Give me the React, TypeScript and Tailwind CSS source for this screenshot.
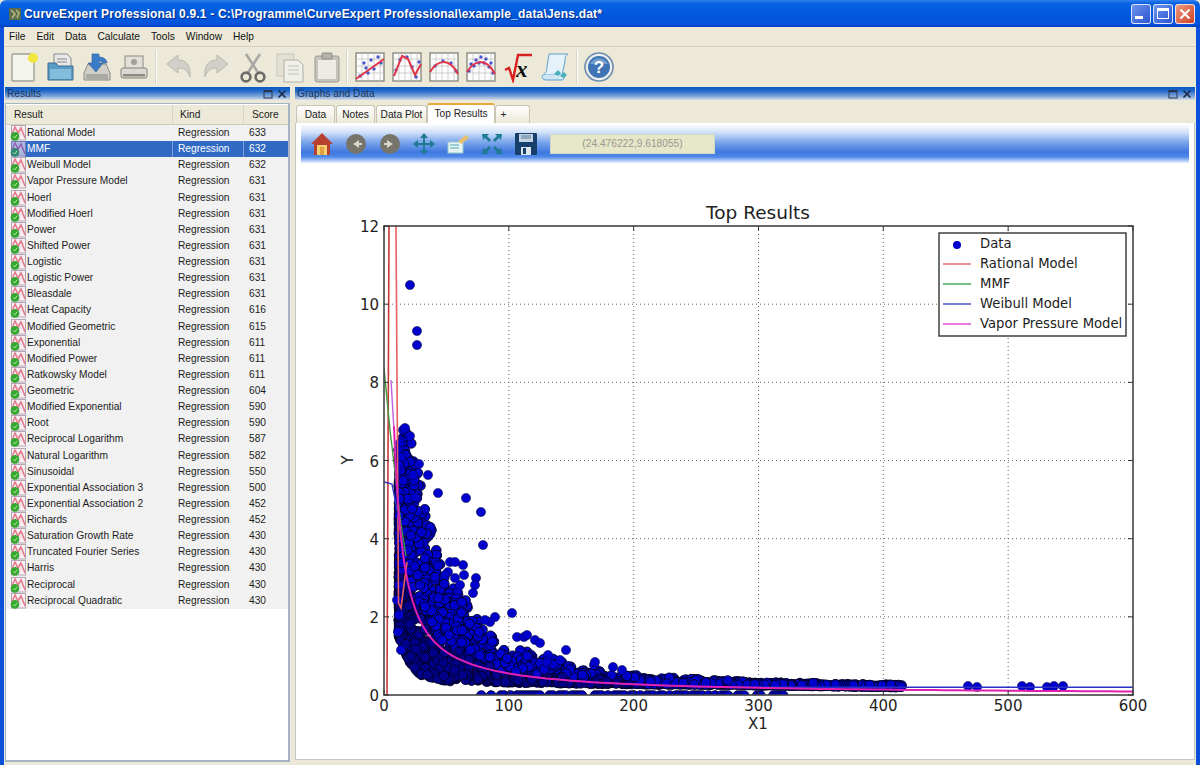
import type { ReactNode } from "react";

const MODELS: [string, number][] = [
  ["Rational Model", 633],
  ["MMF", 632],
  ["Weibull Model", 632],
  ["Vapor Pressure Model", 631],
  ["Hoerl", 631],
  ["Modified Hoerl", 631],
  ["Power", 631],
  ["Shifted Power", 631],
  ["Logistic", 631],
  ["Logistic Power", 631],
  ["Bleasdale", 631],
  ["Heat Capacity", 616],
  ["Modified Geometric", 615],
  ["Exponential", 611],
  ["Modified Power", 611],
  ["Ratkowsky Model", 611],
  ["Geometric", 604],
  ["Modified Exponential", 590],
  ["Root", 590],
  ["Reciprocal Logarithm", 587],
  ["Natural Logarithm", 582],
  ["Sinusoidal", 550],
  ["Exponential Association 3", 500],
  ["Exponential Association 2", 452],
  ["Richards", 452],
  ["Saturation Growth Rate", 430],
  ["Truncated Fourier Series", 430],
  ["Harris", 430],
  ["Reciprocal", 430],
  ["Reciprocal Quadratic", 430],
];

// plot coordinates
const px = (x: number) => 384 + x * 1.2483;
const py = (y: number) => 695 - y * 39.08;

// upper edge of the point cloud, data x -> data y
const UPPER: [number, number][] = [
  [12, 6.2], [16, 6.8], [22, 6.5], [29, 5.4], [37, 4.4], [47, 3.1], [60, 2.6], [69, 2.35], [77, 1.8],
  [90, 1.45], [106, 1.25], [117, 1.0], [147, 0.85], [175, 0.62], [205, 0.48], [300, 0.33], [415, 0.26],
];
const LOWER: [number, number][] = [
  [12, 1.5], [18, 1.0], [24, 0.65], [30, 0.5], [50, 0.36], [100, 0.32], [200, 0.28], [300, 0.25], [415, 0.2],
];

function interp(table: [number, number][], x: number) {
  for (let i = 1; i < table.length; i++) {
    if (x <= table[i][0]) {
      const [x0, y0] = table[i - 1];
      const [x1, y1] = table[i];
      return y0 + ((y1 - y0) * (x - x0)) / (x1 - x0);
    }
  }
  return table[table.length - 1][1];
}

let seed = 12345;
function rnd() {
  seed = (seed + 0x6d2b79f5) | 0;
  let t = Math.imul(seed ^ (seed >>> 15), 1 | seed);
  t = (t + Math.imul(t ^ (t >>> 7), 61 | t)) ^ t;
  return ((t ^ (t >>> 14)) >>> 0) / 4294967296;
}

// jagged top edge on the long tail
const BUMPS = Array.from({ length: 80 }, () => 0.55 + rnd() * 0.6);

const CLOUD: [number, number, string][] = [];
for (let i = 0; i < 2100; i++) {
  const x = 12 + 403 * Math.pow(rnd(), 2.35);
  const lo = interp(LOWER, x);
  const bump = x > 90 ? BUMPS[Math.floor(x / 6)] : 1;
  const hi = lo + (interp(UPPER, x) - lo) * bump;
  const v = Math.pow(rnd(), 1.4);
  const dark = v < 0.35 && x < 200;
  CLOUD.push([px(x), py(lo + (hi - lo) * v), dark ? "#00008a" : "#0000cc"]);
}
// the row of zero values along the axis
for (let x = 78; x < 320; x += 2.6) {
  if (rnd() > 0.35) CLOUD.push([px(x), 695.5, "#0000cc"]);
}

const OUTLIERS: [number, number][] = [
  [410, 285], [417, 331], [417, 345], [403, 430], [405, 428], [410, 436], [466, 498], [481, 512], [483, 545],
  [512, 613], [495, 617], [490, 622], [485, 620], [438, 493], [428, 475], [419, 464], [450, 562], [455, 562],
  [463, 565], [464, 575], [460, 585], [455, 578], [448, 572], [445, 575], [476, 578], [475, 585], [473, 593],
  [517, 637], [524, 637], [527, 635], [535, 640], [540, 643], [566, 650], [560, 660], [548, 655], [547, 662],
  [594, 665], [595, 662], [613, 667], [622, 670], [968, 686], [977, 687], [1022, 686], [1030, 687], [1047, 687],
  [1054, 686], [1063, 686], [400, 443], [398, 450], [401, 457], [399, 465], [397, 600], [399, 615], [398, 632],
  [401, 650], [399, 585], [413, 475], [415, 497],
];

const hyper = (floor: number, from: number) => {
  const pts: string[] = [];
  for (let x = from; x <= 600; x += x < 60 ? 1 : 10) pts.push(`${px(x).toFixed(1)},${py(Math.max(55 / x, floor)).toFixed(1)}`);
  return pts.join(" ");
};

function Plot() {
  const xTicks = [0, 100, 200, 300, 400, 500, 600];
  const yTicks = [0, 2, 4, 6, 8, 10, 12];
  const legend: [string, string][] = [
    ["Rational Model", "#e05555"],
    ["MMF", "#2f9a3f"],
    ["Weibull Model", "#3038c0"],
    ["Vapor Pressure Model", "#e030d0"],
  ];
  return (
    <svg width={892} height={597} viewBox="296 163 892 597" className="block" fontFamily="'DejaVu Sans', sans-serif">
      <defs>
        <clipPath id="axes">
          <rect x={384} y={226} width={749} height={469} />
        </clipPath>
      </defs>
      <text x={758} y={219} textAnchor="middle" fontSize={18.5} fill="#222">Top Results</text>
      {xTicks.slice(1, -1).map((t) => (
        <line key={t} x1={px(t)} x2={px(t)} y1={226} y2={695} stroke="#666" strokeWidth={1} strokeDasharray="1 3" />
      ))}
      {yTicks.slice(1, -1).map((t) => (
        <line key={t} x1={384} x2={1133} y1={py(t)} y2={py(t)} stroke="#666" strokeWidth={1} strokeDasharray="1 3" />
      ))}
      <g clipPath="url(#axes)">
        {CLOUD.map(([x, y, fill], i) => (
          <circle key={i} cx={x} cy={y} r={4.8} fill={fill} stroke="#020220" strokeWidth={0.9} />
        ))}
        {OUTLIERS.map(([x, y], i) => (
          <circle key={i} cx={x} cy={y} r={4.6} fill="#0000cc" stroke="#050530" strokeWidth={0.5} />
        ))}
        <polyline points="387,695 389,226" fill="none" stroke="#c83838" strokeWidth={1.6} />
        <polyline points="396,226 398.5,603 401,608 407,562" fill="none" stroke="#e86060" strokeWidth={1.6} />
        <polyline points="384,368 390,430 396,480 401,525 406,556" fill="none" stroke="#3f9a3f" strokeWidth={1.4} />
        <polyline points="384,482 392,484 398,515 404,552" fill="none" stroke="#3038c0" strokeWidth={1.4} />
        <polyline points={hyper(0.2, 40)} fill="none" stroke="#2830c8" strokeWidth={1.5} />
        <polyline points="391,380 394,430" fill="none" stroke="#c060e0" strokeWidth={1.4} />
        <polyline points={hyper(0, 8)} fill="none" stroke="#e020b0" strokeWidth={2} />
      </g>
      <rect x={384} y={226} width={749} height={469} fill="none" stroke="#444" strokeWidth={1.6} />
      {xTicks.map((t) => (
        <g key={t}>
          <line x1={px(t)} x2={px(t)} y1={695} y2={690} stroke="#333" />
          <line x1={px(t)} x2={px(t)} y1={226} y2={231} stroke="#333" />
          <text x={px(t)} y={711} textAnchor="middle" fontSize={15} fill="#222">{t}</text>
        </g>
      ))}
      {yTicks.map((t) => (
        <g key={t}>
          <line x1={384} x2={389} y1={py(t)} y2={py(t)} stroke="#333" />
          <line x1={1133} x2={1128} y1={py(t)} y2={py(t)} stroke="#333" />
          <text x={379} y={py(t) + 6} textAnchor="end" fontSize={15} fill="#222">{t}</text>
        </g>
      ))}
      <text x={758} y={729} textAnchor="middle" fontSize={15} fill="#222">X1</text>
      <text transform="translate(353 460) rotate(-90)" textAnchor="middle" fontSize={15} fill="#222">Y</text>

      <rect x={939} y={233} width={187} height={103} fill="#fff" stroke="#333" strokeWidth={1.4} />
      <circle cx={957} cy={245} r={4} fill="#0000cc" />
      <text x={980} y={248} fontSize={13.2} fill="#222">Data</text>
      {legend.map(([name, color], i) => (
        <g key={name}>
          <line x1={943} x2={971} y1={264 + i * 20} y2={264 + i * 20} stroke={color} strokeWidth={1.3} />
          <text x={980} y={268 + i * 20} fontSize={13.2} fill="#222">{name}</text>
        </g>
      ))}
    </svg>
  );
}

function RowIcon({ selected }: { selected?: boolean }) {
  return (
    <svg width={16} height={16} viewBox="0 0 16 16" className="shrink-0">
      <rect x={1.5} y={0.5} width={14} height={14.5} fill={selected ? "#aab4e0" : "#fbf0f2"} stroke={selected ? "#7080b8" : "#b0a8b4"} />
      <path d="M2 5h13M2 9h13M6 1v13M10 1v13" stroke="#d0c8d8" strokeWidth={0.5} />
      <path d="M2 9 L5 2 L8 8 L11 3 L15 13" fill="none" stroke={selected ? "#9060b0" : "#e47888"} strokeWidth={1.5} />
      <circle cx={5} cy={11.4} r={4.3} fill={selected ? "#2f8a70" : "#35a82f"} />
      <path d="M3.2 11.4l1.5 1.5 2.4-3" fill="none" stroke="#d8f8c8" strokeWidth={0.8} />
    </svg>
  );
}

function ResultsList() {
  return (
    <div className="flex-1 bg-white border border-[#a4b4c4] border-r-2 border-b-2 pt-px min-h-0">
      <div className="flex h-[20px] bg-[#ece9d8] text-[#222] border-b border-[#cfccbc]">
        <div className="w-[167px] pl-[8px] leading-[19px] border-r border-[#d8d5c5]">Result</div>
        <div className="w-[71px] pl-[7px] leading-[19px] border-r border-[#d8d5c5]">Kind</div>
        <div className="flex-1 pl-[8px] leading-[19px]">Score</div>
      </div>
      {MODELS.map(([name, score], i) => {
        const selected = i === 1;
        return (
          <div key={name} className="flex h-[16.14px] bg-[#f1f1f1] leading-[16px] text-[#1c1c1c]">
            <div className={selected ? "w-[167px] flex items-center pl-[4px] bg-[linear-gradient(to_right,#f1f1f1_0,#f1f1f1_19px,#316ac5_19px)] text-white border-r border-[#7f9fd8]" : "w-[167px] flex items-center pl-[4px] border-r border-[#f1f1f1]"}>
              <RowIcon selected={selected} />
              <span className="ml-px whitespace-nowrap">{name}</span>
            </div>
            <div className={selected ? "w-[71px] pl-[5px] bg-[#316ac5] text-white border-r border-[#7f9fd8]" : "w-[71px] pl-[5px] border-r border-[#f1f1f1]"}>Regression</div>
            <div className={selected ? "flex-1 pl-[5px] bg-[#316ac5] text-white" : "flex-1 pl-[5px]"}>{score}</div>
          </div>
        );
      })}
    </div>
  );
}

function PaneTitle({ title }: { title: string }) {
  return (
    <div className="flex items-center justify-between h-[13px] mb-[3px] pl-[2px] pr-[3px] bg-[linear-gradient(to_bottom,#0a58c4_0%,#1a66cc_25%,#7ea3d8_70%,#d6dfe9_100%)] text-[10.2px] text-[#1d3557] leading-[13px]">
      <span>{title}</span>
      <span className="flex items-center gap-[4px]">
        <svg width={10} height={10} viewBox="0 0 10 10">
          <rect x={1} y={1.5} width={8} height={7.5} fill="none" stroke="#27364f" strokeWidth={1} />
          <path d="M1 2.5h8" stroke="#27364f" strokeWidth={1.4} />
        </svg>
        <svg width={10} height={10} viewBox="0 0 10 10">
          <path d="M1.5 1.5l7 7M8.5 1.5l-7 7" stroke="#1a2a44" strokeWidth={1.6} />
        </svg>
      </span>
    </div>
  );
}

function Tabs() {
  const tab = "h-[18px] mt-[2px] border border-b-0 border-[#c8c5b4] rounded-t-[3px] bg-[linear-gradient(to_bottom,#ffffff,#ece9d8)] text-center leading-[18px] text-[#222]";
  return (
    <div className="flex h-[20px] pl-[1px] text-[10.2px]">
      <div className={`${tab} w-[39px]`}>Data</div>
      <div className={`${tab} w-[39px] ml-[1px]`}>Notes</div>
      <div className={`${tab} w-[51px] ml-[1px]`}>Data Plot</div>
      <div className="w-[68px] h-[20px] border-t-2 border-x border-t-[#e8a838] border-x-[#c8c5b4] rounded-t-[3px] bg-white text-center leading-[17px] text-[#222]">Top Results</div>
      <div className={`${tab} w-[35px] pr-[18px]`}>+</div>
    </div>
  );
}

const Sep = ({ className }: { className: string }) => <div className={`w-[2px] h-[34px] border-l border-[#d8d5c4] border-r-white border-r ${className}`} />;

function Ico({ w, children }: { w: number; children: ReactNode }) {
  return (
    <svg width={w} height={32} viewBox={`0 0 ${w} 32`} className="shrink-0">
      {children}
    </svg>
  );
}

function PlotIcon({ line, dots }: { line: string; dots: [number, number][] }) {
  return (
    <Ico w={30}>
      <rect x={1} y={2} width={28} height={28} fill="#fdfdfd" stroke="#8a8a80" strokeWidth={1.4} />
      <path d="M7 2v28M13 2v28M19 2v28M25 2v28M1 8h28M1 15h28M1 22h28" stroke="#bcbcb8" strokeWidth={0.7} />
      {dots.map(([x, y], i) => (
        <circle key={i} cx={x} cy={y} r={1.7} fill="#4a55cc" />
      ))}
      <path d={line} fill="none" stroke="#e03448" strokeWidth={2} />
    </Ico>
  );
}

function MainToolbar() {
  return (
    <div className="flex items-center h-[40px] pl-[6px]">
      <div className="flex items-center gap-[8.7px]">
        <Ico w={28}>
          <rect x={2} y={3} width={22} height={27} rx={1} fill="#f4f4ee" stroke="#a0a098" strokeWidth={1.4} />
          <circle cx={23} cy={7} r={5} fill="#f2e640" />
        </Ico>
        <Ico w={28}>
          <path d="M7 3h13l4 4v12H7z" fill="#e8e8e8" stroke="#8a8a8a" />
          <path d="M10 8h10M10 11h10" stroke="#888" />
          <path d="M1 12h8l2 3h15v14H1z" fill="#5a9cc8" stroke="#3d6e94" />
          <path d="M3 18h21v10H3z" fill="#84bcdc" />
        </Ico>
        <Ico w={28}>
          <path d="M1 22l4-9h18l4 9v7H1z" fill="#d0d0c8" stroke="#8a8a84" />
          <rect x={3} y={23} width={22} height={5} fill="#aaaaa4" />
          <path d="M9 3h7v3c5 0 8 3 8 6h-4c-1-1-2-2-4-2v2l4 0-7 9-8-9h4z" fill="#3a7cc8" stroke="#28588f" strokeWidth={0.6} />
        </Ico>
        <Ico w={28}>
          <rect x={5} y={5} width={18} height={13} fill="#e0e0d8" stroke="#8c8c84" />
          <circle cx={14} cy={11} r={3} fill="#a0a098" />
          <rect x={1} y={17} width={26} height={10} rx={2} fill="#dadad2" stroke="#84847c" />
          <rect x={3} y={23} width={22} height={2.5} fill="#8c8c84" />
        </Ico>
      </div>
      <Sep className="ml-[7px]" />
      <div className="flex items-center gap-[9px] ml-[8px]">
        <Ico w={28}>
          <path d="M2 13L13 4v5c8 0 13 5 12 17-2-6-5-9-12-9v5z" fill="#d0d0c8" stroke="#b8b8b0" />
        </Ico>
        <Ico w={28}>
          <path d="M26 13L15 4v5c-8 0-13 5-12 17 2-6 5-9 12-9v5z" fill="#d0d0c8" stroke="#b8b8b0" />
        </Ico>
        <Ico w={28}>
          <path d="M7 3l13 20M21 3L8 23" stroke="#a8a8a4" strokeWidth={2.6} />
          <circle cx={7} cy={26} r={4.4} fill="none" stroke="#6c6c68" strokeWidth={2.6} />
          <circle cx={21} cy={26} r={4.4} fill="none" stroke="#6c6c68" strokeWidth={2.6} />
        </Ico>
        <Ico w={28}>
          <rect x={1} y={3} width={17} height={22} fill="#e2e0d2" stroke="#c8c8bc" />
          <path d="M8 9h14l5 5v17H8z" fill="#f0f0ea" stroke="#b0b0a8" />
          <path d="M12 15h11M12 19h11M12 23h11" stroke="#c0c0b8" />
        </Ico>
        <Ico w={28}>
          <rect x={2} y={5} width={24} height={26} rx={2} fill="#c4c4bc" stroke="#9c9c94" />
          <rect x={5} y={9} width={18} height={19} fill="#ecece4" />
          <rect x={9} y={2} width={10} height={6} rx={1} fill="#b4b4ac" stroke="#8c8c84" />
        </Ico>
      </div>
      <Sep className="ml-[5px]" />
      <div className="flex items-center gap-[7px] ml-[7px]">
        <PlotIcon line="M1 28L29 8" dots={[[5, 25], [9, 12], [13, 22], [16, 9], [19, 18], [23, 6], [26, 12], [11, 17]]} />
        <PlotIcon line="M2 25L10 5l6 3 7 16 6-11" dots={[[4, 19], [8, 9], [15, 6], [20, 16], [24, 26], [27, 11]]} />
        <PlotIcon line="M1 21C8 9 20 6 29 23" dots={[[6, 15], [14, 10], [22, 12], [27, 20]]} />
        <PlotIcon line="M1 21C8 9 20 6 29 23" dots={[[3, 20], [5, 13], [8, 15], [10, 9], [13, 12], [15, 6], [18, 12], [20, 8], [23, 16], [25, 12], [27, 22]]} />
        <Ico w={30}>
          <path d="M2 19l4-2 4 12 5-25h14" fill="none" stroke="#d82020" strokeWidth={2.4} />
          <text x={13} y={26} fontFamily="'Liberation Serif', serif" fontStyle="italic" fontWeight={700} fontSize={23} fill="#111">x</text>
        </Ico>
        <Ico w={30}>
          <path d="M9 3h19c-3 2-3 4-3 7l-3 14H3c3-2 4-4 4-8z" fill="#e6f2fa" stroke="#5aa0cc" />
          <path d="M3 24c-2 2 0 5 3 5h16c2 0 3-3 2-5" fill="#d0e8f4" stroke="#5aa0cc" />
          <path d="M14 23l4-4 3 3-3 3zM20 25l4-4 3 3-3 3z" fill="#48b0b8" />
        </Ico>
      </div>
      <Sep className="ml-[6px]" />
      <div className="ml-[6px]">
        <Ico w={30}>
          <circle cx={15} cy={16} r={14} fill="#eef0ee" stroke="#6c8cb0" strokeWidth={1.6} />
          <circle cx={15} cy={16} r={11} fill="#3f74b4" />
          <path d="M6 13a10 10 0 0 1 18 0z" fill="#8ab0d8" opacity={0.7} />
          <text x={15} y={22} textAnchor="middle" fontFamily="'Liberation Sans', sans-serif" fontWeight={700} fontSize={17} fill="#fff">?</text>
        </Ico>
      </div>
    </div>
  );
}

function NavToolbar() {
  const teal = "#1f7a94";
  return (
    <div className="flex items-center h-[39px] mt-px mx-[5px] pl-[10px] gap-[12px] bg-[linear-gradient(to_bottom,#ffffff_0%,#cfe0f8_22%,#7fa9ec_45%,#3f78e0_72%,#4d88e8_84%,#eaf1fd_100%)]">
      <svg width={22} height={24} viewBox="0 0 22 24" className="shrink-0">
        <path d="M11 1L0 12h3v11h16V12h3z" fill="#b84030" />
        <path d="M6 13h10v10H6z" fill="#f4d070" />
        <path d="M9 15h4v8H9z" fill="#e0a040" />
      </svg>
      <svg width={22} height={24} viewBox="0 0 22 24" className="shrink-0">
        <circle cx={11} cy={12} r={10} fill="#77746c" />
        <path d="M14 8v3h3v2h-3v3l-6-4z" fill="#d8d6ce" />
      </svg>
      <svg width={22} height={24} viewBox="0 0 22 24" className="shrink-0">
        <circle cx={11} cy={12} r={10} fill="#77746c" />
        <path d="M8 8v3H5v2h3v3l6-4z" fill="#d8d6ce" />
      </svg>
      <svg width={22} height={24} viewBox="0 0 22 24" className="shrink-0">
        <path d="M11 1l4 5h-3v5h5V8l5 4-5 4v-3h-5v5h3l-4 5-4-5h3v-5H5v3l-5-4 5-4v3h5V6H7z" fill={teal} />
      </svg>
      <svg width={22} height={24} viewBox="0 0 22 24" className="shrink-0">
        <rect x={1} y={10} width={15} height={11} fill="#e8f4f4" stroke="#9cc" />
        <path d="M3 13h9M3 16h9" stroke="#4aa8b8" />
        <path d="M11 9l8-6 3 3-8 6z" fill="#e8c070" />
      </svg>
      <svg width={22} height={24} viewBox="0 0 22 24" className="shrink-0">
        <path d="M1 2h7L6 4l4 4-2 2-4-4-2 2zM21 2h-7l2 2-4 4 2 2 4-4 2 2zM1 22h7l-2-2 4-4-2-2-4 4-2-2zM21 22h-7l2-2-4-4 2-2 4 4 2-2z" fill={teal} />
      </svg>
      <svg width={22} height={24} viewBox="0 0 22 24" className="shrink-0">
        <rect x={0} y={1} width={22} height={22} rx={1} fill="#173f6c" />
        <rect x={4} y={2} width={14} height={8} fill="#c4d4e4" />
        <path d="M6 4h10M6 6h10" stroke="#5a7894" />
        <rect x={6} y={15} width={10} height={8} fill="#dce4ec" />
        <rect x={8} y={16} width={3} height={6} fill="#173f6c" />
      </svg>
      <div className="w-[165px] h-[20px] ml-px bg-[#e6e6c8] border border-[#d0d8c8] text-center text-[10.2px] leading-[18px] text-[#9a9a90]">(24.476222,9.618055)</div>
    </div>
  );
}

function WinButton({ className, children }: { className: string; children: ReactNode }) {
  return <div className={`w-[20px] h-[20px] rounded-[3px] border border-white/80 flex items-center justify-center ${className}`}>{children}</div>;
}

export default function App() {
  return (
    <div className="w-[1200px] h-[765px] flex flex-col overflow-hidden bg-[#ece9d8] text-[10.2px] font-['Liberation_Sans',Arial,sans-serif]">
      {/* title bar */}
      <div className="flex items-center h-[27px] shrink-0 pl-[8px] pr-[5px] rounded-t-[6px] bg-[linear-gradient(to_bottom,#2f83f0_0%,#0a62e4_12%,#0058dc_55%,#0256dd_85%,#0040c4_100%)]">
        <svg width={14} height={14} viewBox="0 0 14 14" className="shrink-0">
          <rect x={1} y={1} width={12} height={12} fill="#5c6a50" />
          <path d="M3 3l4 4-3 4M8 3l3 3-2 5" stroke="#b8b878" strokeWidth={1.6} fill="none" />
        </svg>
        <span className="ml-[2px] text-white font-bold text-[12px] tracking-[0.2px] whitespace-nowrap [text-shadow:1px_1px_1px_#0a2a80]">
          CurveExpert Professional 0.9.1 - C:\Programme\CurveExpert Professional\example_data\Jens.dat*
        </span>
        <div className="ml-auto flex gap-[2px]">
          <WinButton className="bg-[linear-gradient(135deg,#6f94ee,#2a55d0)]">
            <div className="w-[8px] h-[3px] bg-white mt-[8px] mr-[4px]" />
          </WinButton>
          <WinButton className="bg-[linear-gradient(135deg,#6f94ee,#2a55d0)]">
            <div className="w-[12px] h-[11px] border border-t-[3px] border-white" />
          </WinButton>
          <WinButton className="bg-[linear-gradient(135deg,#ec9a80,#cf4020)]">
            <svg width={12} height={12} viewBox="0 0 12 12">
              <path d="M1.5 1.5l9 9M10.5 1.5l-9 9" stroke="#fff" strokeWidth={2.2} />
            </svg>
          </WinButton>
        </div>
      </div>

      <div className="flex-1 min-h-0 flex flex-col border-x-4 border-x-[#0a50dc]">
        {/* menu */}
        <div className="flex items-center h-[20px] shrink-0 pl-[5px] gap-[11px] text-[#111] border-b border-[#d4d0bc]">
          {["File", "Edit", "Data", "Calculate", "Tools", "Window", "Help"].map((m) => (
            <span key={m}>{m}</span>
          ))}
        </div>
        <MainToolbar />

        {/* panes */}
        <div className="flex-1 min-h-0 flex pb-[3px]">
          <div className="w-[286px] pl-px flex flex-col">
            <PaneTitle title="Results" />
            <ResultsList />
          </div>
          <div className="w-[900px] ml-[5px] flex flex-col">
            <PaneTitle title="Graphs and Data" />
            <Tabs />
            <div className="flex-1 min-h-0 bg-white border-x border-b border-[#c0c8c8] mb-[2px]">
              <NavToolbar />
              <Plot />
            </div>
          </div>
        </div>
      </div>
    </div>
  );
}
